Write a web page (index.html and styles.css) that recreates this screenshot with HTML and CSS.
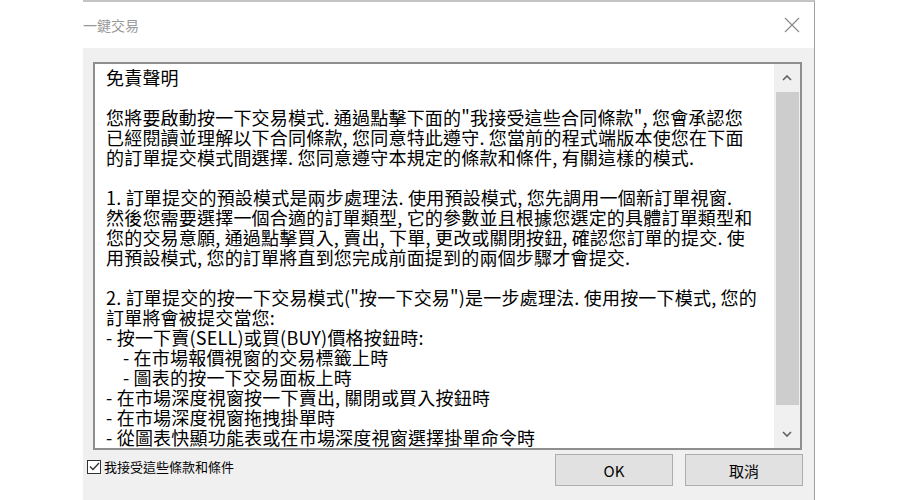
FILE: index.html
```html
<!DOCTYPE html>
<html lang="zh-Hant">
<head>
    <meta charset="UTF-8">
    <title>一鍵交易</title>
    <link rel="stylesheet" href="styles.css">
</head>
<body>
    <div class="dialog">
        <div class="titlebar">
            <span class="title">一鍵交易</span>
            <svg class="close" width="16" height="16" viewBox="0 0 16 16">
                <path d="M1 1 L15 15 M15 1 L1 15" stroke="#8a8a8a" stroke-width="1.2" fill="none"/>
            </svg>
        </div>
        <div class="body">
            <div class="textbox">
                <div class="content">
                    <p>免責聲明</p>
                    <p>您將要啟動按一下交易模式. 通過點擊下面的"我接受這些合同條款", 您會承認您
已經閱讀並理解以下合同條款, 您同意特此遵守. 您當前的程式端版本使您在下面
的訂單提交模式間選擇. 您同意遵守本規定的條款和條件, 有關這樣的模式.</p>
                    <p>1. 訂單提交的預設模式是兩步處理法. 使用預設模式, 您先調用一個新訂單視窗.
然後您需要選擇一個合適的訂單類型, 它的參數並且根據您選定的具體訂單類型和
您的交易意願, 通過點擊買入, 賣出, 下單, 更改或關閉按鈕, 確認您訂單的提交. 使
用預設模式, 您的訂單將直到您完成前面提到的兩個步驟才會提交.</p>
                    <p>2. 訂單提交的按一下交易模式("按一下交易")是一步處理法. 使用按一下模式, 您的
訂單將會被提交當您:
- 按一下賣(SELL)或買(BUY)價格按鈕時:
    - 在市場報價視窗的交易標籤上時
    - 圖表的按一下交易面板上時
- 在市場深度視窗按一下賣出, 關閉或買入按鈕時
- 在市場深度視窗拖拽掛單時
- 從圖表快顯功能表或在市場深度視窗選擇掛單命令時</p>
                </div>
                <div class="scrollbar">
                    <div class="arrow-btn">
                        <svg width="10" height="6" viewBox="0 0 10 6">
                            <path d="M1 5 L5 1 L9 5" stroke="#606060" stroke-width="1.6" fill="none"/>
                        </svg>
                    </div>
                    <div class="thumb"></div>
                    <div class="track"></div>
                    <div class="arrow-btn">
                        <svg width="10" height="6" viewBox="0 0 10 6">
                            <path d="M1 1 L5 5 L9 1" stroke="#606060" stroke-width="1.6" fill="none"/>
                        </svg>
                    </div>
                </div>
            </div>
            <div class="footer">
                <label class="agree">
                    <span class="checkbox">
                        <svg width="11" height="9" viewBox="0 0 11 9">
                            <path d="M1 4.5 L4 7.5 L10 1" stroke="#333" stroke-width="1.3" fill="none"/>
                        </svg>
                    </span>
                    我接受這些條款和條件
                </label>
                <div class="actions">
                    <button class="btn">OK</button>
                    <button class="btn">取消</button>
                </div>
            </div>
        </div>
    </div>
</body>
</html>
```

FILE: styles.css
```css
body {
    margin: 0;
    background: #fff;
    font-family: "Noto Sans CJK TC", "Noto Sans", sans-serif;
    color: #000;
}

.dialog {
    margin-left: 83px;
    width: 731px;
    height: 498px;
    border-top: 2px solid #c4c4c4;
    border-right: 1px solid #a0a0a0;
    background: #f0f0f0;
    display: flex;
    flex-direction: column;
}

.titlebar {
    height: 46px;
    background: #fff;
    display: flex;
    align-items: center;
    justify-content: space-between;
    padding-right: 14px;
}

.title {
    font-size: 14px;
    color: #999;
}

.body {
    flex: 1;
    padding: 14px 12px 0 10px;
    display: flex;
    flex-direction: column;
}

.textbox {
    height: 384px;
    border: 2px solid #8e8e8e;
    background: #fff;
    display: flex;
}

.content {
    flex: 1;
    padding: 3px 0 0 11px;
    font-size: 18px;
    line-height: 20px;
    letter-spacing: 0.2px;
    overflow: hidden;
}

.content p {
    margin: 0 0 20px;
    white-space: pre;
}

.scrollbar {
    width: 26px;
    background: #f0f0f0;
    display: flex;
    flex-direction: column;
    align-items: center;
}

.arrow-btn {
    height: 28px;
    display: flex;
    align-items: center;
    justify-content: center;
}

.thumb {
    height: 313px;
    width: 23px;
    background: #cdcdcd;
}

.track {
    flex: 1;
}

.footer {
    display: flex;
    align-items: flex-start;
    justify-content: space-between;
    padding-top: 4px;
}

.agree {
    display: flex;
    align-items: center;
    gap: 3px;
    font-size: 13px;
    margin: 3px 0 0 -6px;
}

.checkbox {
    width: 12px;
    height: 12px;
    border: 1px solid #333;
    background: #fff;
    display: flex;
    align-items: center;
    justify-content: center;
}

.actions {
    display: flex;
    gap: 12px;
    margin-right: -1px;
}

.btn {
    width: 118px;
    height: 32px;
    font-family: "Noto Sans CJK TC", "Noto Sans", sans-serif;
    font-size: 15px;
    background: #e1e1e1;
    border: 1px solid #adadad;
    color: #000;
}
```
